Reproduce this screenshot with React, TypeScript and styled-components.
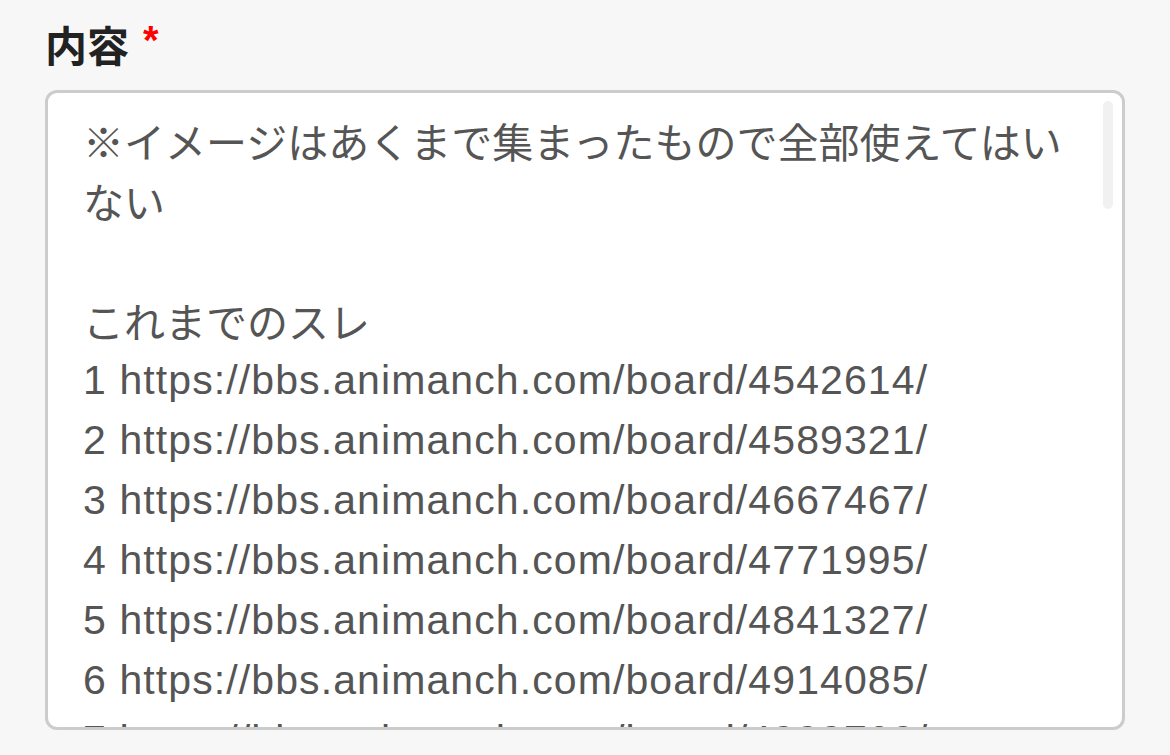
import React from 'react'
import styled, { createGlobalStyle } from 'styled-components'

const GlobalStyle = createGlobalStyle`
  html, body {
    margin: 0;
    padding: 0;
    background: #f7f7f7;
  }
  body {
    font-family: 'Liberation Sans', 'Noto Sans CJK JP', sans-serif;
  }
`

const Page = styled.div`
  padding: 11px 45px 0 45px;
  width: 1080px;
`

const Label = styled.div`
  display: flex;
  align-items: center;
  gap: 14px;
  height: 64px;
  margin-bottom: 15px;
  font-size: 42px;
  font-weight: 700;
  color: #222;
  font-family: 'Noto Sans CJK JP', sans-serif;
`

const Required = styled.span`
  color: #f00;
  font-family: 'Liberation Sans', sans-serif;
  font-size: 40px;
  line-height: 1;
  transform: translateY(-3px);
`

const Field = styled.div`
  position: relative;
  box-sizing: border-box;
  height: 640px;
  background: #fff;
  border: 3px solid #cccccc;
  border-radius: 12px;
  overflow: hidden;
`

const Content = styled.div`
  padding: 17px 50px 0 35px;
  color: #555;
  font-size: 41px;
  line-height: 60px;
  white-space: pre-wrap;
`

const Line = styled.div<{ $latin?: boolean }>`
  min-height: 60px;
  letter-spacing: ${p => (p.$latin ? '1.1px' : '0')};
  font-family: ${p =>
    p.$latin
      ? "'Liberation Sans', sans-serif"
      : "'Noto Sans CJK JP', sans-serif"};
`

const ScrollThumb = styled.div`
  position: absolute;
  top: 8px;
  right: 9px;
  width: 10px;
  height: 108px;
  border-radius: 5px;
  background: #f1f1f1;
`

const threads = [
  '4542614',
  '4589321',
  '4667467',
  '4771995',
  '4841327',
  '4914085',
  '4999709',
]

const App = () => (
  <>
    <GlobalStyle />
    <Page>
      <Label>
        内容
        <Required>*</Required>
      </Label>
      <Field>
        <Content>
          <Line>※イメージはあくまで集まったもので全部使えてはいない</Line>
          <Line />
          <Line>これまでのスレ</Line>
          {threads.map((id, i) => (
            <Line $latin key={id}>
              {i + 1} https://bbs.animanch.com/board/{id}/
            </Line>
          ))}
        </Content>
        <ScrollThumb />
      </Field>
    </Page>
  </>
)

export default App
